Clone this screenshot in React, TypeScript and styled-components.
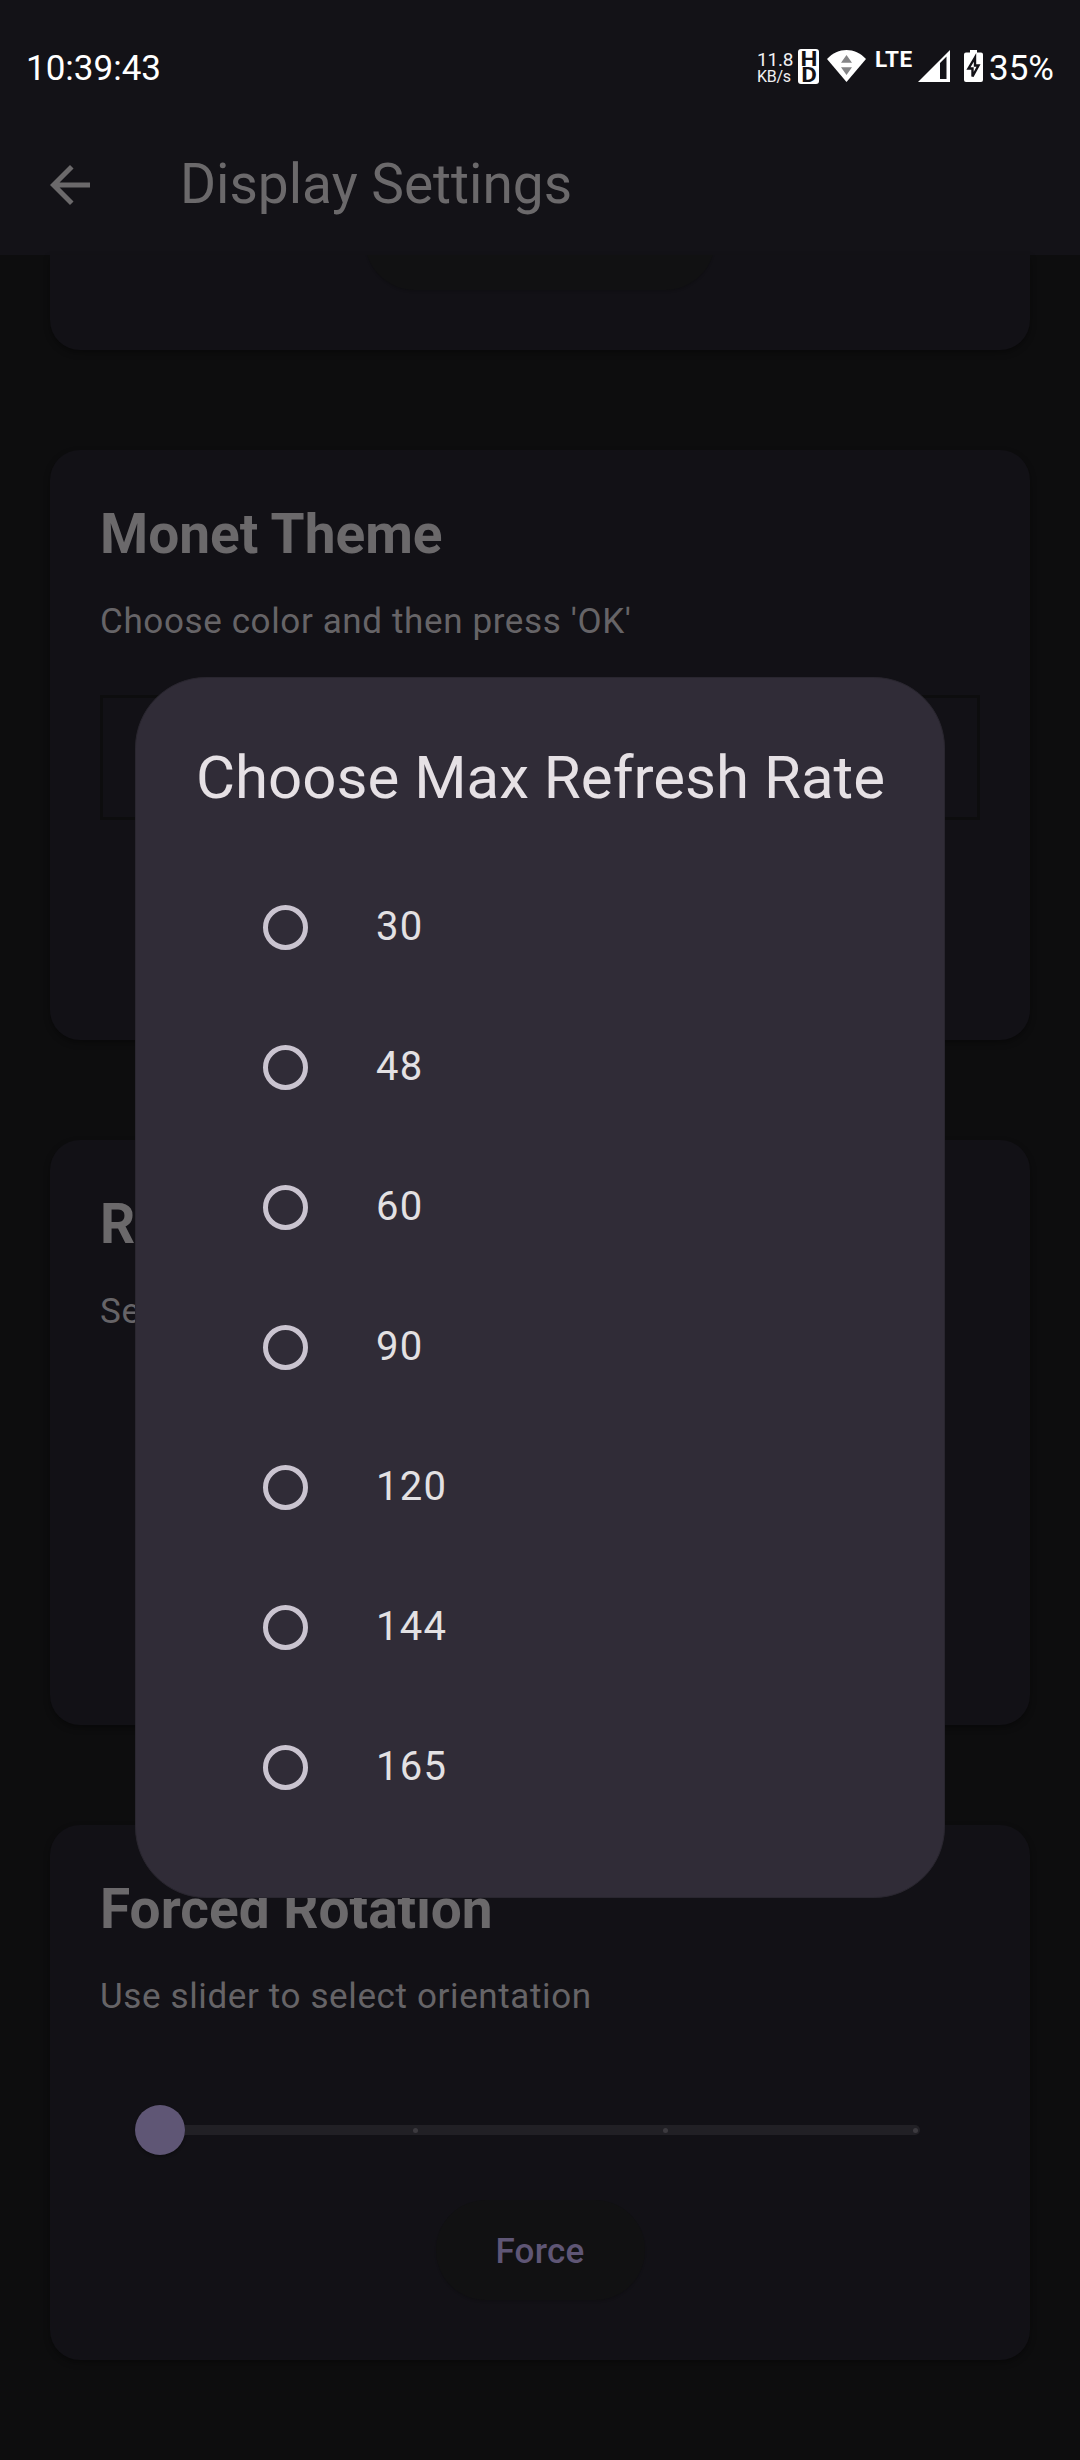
import React from "react";
import styled, { createGlobalStyle } from "styled-components";

const GlobalStyle = createGlobalStyle`
  *, *::before, *::after { box-sizing: border-box; }
  body { margin: 0; background: #0d0d0e; font-family: Roboto, "Noto Sans", sans-serif; }
  h1, h2, p { margin: 0; font-weight: 400; }
`;

const Screen = styled.div`
  position: relative;
  width: 1080px;
  height: 2460px;
  overflow: hidden;
  display: flex;
  flex-direction: column;
  background: #0d0d0e;
`;

const Header = styled.header`
  flex: none;
  height: 255px;
  background: #131217;
`;

const StatusBar = styled.div`
  height: 115px;
  padding: 17px 26px 0 26px;
  display: flex;
  align-items: center;
  color: #fff;
  font-size: 35px;
  line-height: 40px;
`;

const Clock = styled.span`
  flex: 1;
  padding-top: 5px;
`;

const Percent = styled.span`
  padding-top: 5px;
`;

const NetSpeed = styled.span`
  display: flex;
  flex-direction: column;
  width: 36px;
  margin-right: 5px;
  padding-top: 4px;
  white-space: nowrap;
  color: #f0f0f2;
`;

const SpeedValue = styled.span`
  font-size: 19px;
  line-height: 17px;
  letter-spacing: -0.2px;
`;

const SpeedUnit = styled.span`
  font-size: 16px;
  line-height: 18px;
  letter-spacing: -0.3px;
`;

const HdBadge = styled.span`
  width: 21px;
  height: 35px;
  margin-right: 8px;
  border-radius: 3px;
  background: #fff;
  color: #131217;
  display: flex;
  justify-content: center;
`;

const HdText = styled.span`
  width: 14px;
  font-size: 20px;
  line-height: 16px;
  padding-top: 2px;
  font-weight: 700;
  text-align: center;
  word-break: break-all;
  transform: scaleX(1.2);
`;

const Lte = styled.span`
  align-self: flex-start;
  margin: 22px 4px 0 9px;
  width: 39px;
  font-size: 22.5px;
  line-height: 40px;
  font-weight: 700;
  letter-spacing: 0.4px;
`;

const Battery = styled.svg`
  margin: 0 6px 0 14px;
`;

const AppBar = styled.div`
  height: 140px;
  padding: 0 40px;
  display: flex;
  align-items: center;
  gap: 80px;
`;

const AppTitle = styled.h1`
  padding-bottom: 2px;
  color: #6b696b;
  font-size: 55px;
  line-height: 70px;
`;

const Content = styled.main`
  flex: 1;
  padding: 0 50px;
  display: flex;
  flex-direction: column;
  gap: 100px;
`;

const Card = styled.section<{ $height: number; $cut?: boolean }>`
  flex: none;
  height: ${(p) => p.$height}px;
  padding: ${(p) => (p.$cut ? "0" : "51px 50px 0")};
  border-radius: ${(p) => (p.$cut ? "0 0 30px 30px" : "30px")};
  overflow: hidden;
  background: #121116;
  box-shadow: 0 3px 6px rgba(0, 0, 0, 0.35);
  display: flex;
  flex-direction: column;
`;

const CardTitle = styled.h2`
  color: #6b696b;
  font-size: 55px;
  line-height: 66px;
  font-weight: 700;
`;

const CardText = styled.p`
  margin-top: 30px;
  color: #666467;
  font-size: 35px;
  line-height: 50px;
  letter-spacing: 0.625px;
`;

const ColorBox = styled.div`
  margin-top: 48px;
  height: 125px;
  border: 3px solid #0d0d0e;
`;

const PillButton = styled.button<{ $width: number; $top: number }>`
  flex: none;
  align-self: center;
  margin-top: ${(p) => p.$top}px;
  width: ${(p) => p.$width}px;
  height: 100px;
  padding: 4px 0 0;
  border: 0;
  border-radius: 50px;
  background: #111112;
  box-shadow: 0 2px 2px rgba(0, 0, 0, 0.12);
  color: #5f5675;
  font: 500 35px/50px Roboto, sans-serif;
  letter-spacing: 0.25px;
`;

const Slider = styled.div`
  margin: 83px 60px 0 35px;
  height: 50px;
  display: flex;
  align-items: center;
`;

const Thumb = styled.span`
  width: 50px;
  height: 50px;
  border-radius: 50%;
  background: #5f5675;
  box-shadow: 0 2px 3px rgba(0, 0, 0, 0.3);
`;

const Track = styled.span`
  flex: 1;
  height: 10px;
  border-radius: 0 5px 5px 0;
  background: #212025;
  display: flex;
  align-items: center;
`;

const Tick = styled.i<{ $gap: number }>`
  width: 5px;
  height: 5px;
  margin-left: ${(p) => p.$gap}px;
  border-radius: 50%;
  background: #3c3a3f;
`;

const Dialog = styled.div`
  position: absolute;
  left: 135px;
  top: 677px;
  width: 810px;
  height: 1221px;
  padding: 60px 59px 0;
  border: 1px solid #29262f;
  border-radius: 71px;
  background: #302c37;
`;

const DialogTitle = styled.h2`
  height: 119px;
  padding-left: 1px;
  color: #e6e1e5;
  font-size: 60px;
  line-height: 80px;
  white-space: nowrap;
`;

const Option = styled.label`
  height: 140px;
  padding-left: 68px;
  display: flex;
  align-items: center;
  gap: 68px;
  color: #e3e1e3;
  font-size: 40px;
  line-height: 50px;
  letter-spacing: 1.25px;
`;

const Radio = styled.span`
  width: 45px;
  height: 45px;
  border: 5px solid #cac4d0;
  border-radius: 50%;
`;

const rates = [30, 48, 60, 90, 120, 144, 165];

export default function App() {
  return (
    <>
      <GlobalStyle />
      <Screen>
        <Header>
          <StatusBar>
            <Clock>10:39:43</Clock>
            <NetSpeed>
              <SpeedValue>11.8</SpeedValue>
              <SpeedUnit>KB/s</SpeedUnit>
            </NetSpeed>
            <HdBadge>
              <HdText>HD</HdText>
            </HdBadge>
            <svg width="39" height="32" viewBox="0 0 39 32">
              <path d="M0 9C11-3 28-3 39 9L19.5 32Z" fill="#fff" />
              <path d="M14 12.700h11L19.500 5zM14 17.300h11L19.500 25z" fill="#858587" />
            </svg>
            <Lte>LTE</Lte>
            <svg width="32" height="32" viewBox="0 0 32 32">
              <path fillRule="evenodd" d="M0 32L32 0V32ZM22 13V29H28.500V6.500Z" fill="#fff" />
            </svg>
            <Battery width="19" height="32" viewBox="0 0 19 32">
              <path d="M6 0h7v2.500h4q2 0 2 2v25.500q0 2-2 2H2q-2 0-2-2V4.500q0-2 2-2h4z" fill="#fff" />
              <path
                d="M11 7.500L4.500 18.500H8.500V26.500L14.500 15.500H11z"
                fill="#fff"
                stroke="#131217"
                strokeWidth="2.400"
              />
            </Battery>
            <Percent>35%</Percent>
          </StatusBar>
          <AppBar>
            <svg width="60" height="60" viewBox="0 0 24 24">
              <path d="M20 11H7.830l5.590-5.590L12 4l-8 8 8 8 1.410-1.410L7.830 13H20v-2z" fill="#6b696b" />
            </svg>
            <AppTitle>Display Settings</AppTitle>
          </AppBar>
        </Header>
        <Content>
          <Card $height={95} $cut>
            <PillButton $width={350} $top={-65} />
          </Card>
          <Card $height={590}>
            <CardTitle>Monet Theme</CardTitle>
            <CardText>Choose color and then press 'OK'</CardText>
            <ColorBox />
          </Card>
          <Card $height={585}>
            <CardTitle>R</CardTitle>
            <CardText>Se</CardText>
          </Card>
          <Card $height={535}>
            <CardTitle>Forced Rotation</CardTitle>
            <CardText>Use slider to select orientation</CardText>
            <Slider>
              <Thumb />
              <Track>
                <Tick $gap={227.5} />
                <Tick $gap={245} />
                <Tick $gap={245} />
              </Track>
            </Slider>
            <PillButton $width={209} $top={45}>
              Force
            </PillButton>
          </Card>
        </Content>
        <Dialog role="dialog">
          <DialogTitle>Choose Max Refresh Rate</DialogTitle>
          {rates.map((rate) => (
            <Option key={rate}>
              <Radio />
              <span>{rate}</span>
            </Option>
          ))}
        </Dialog>
      </Screen>
    </>
  );
}
